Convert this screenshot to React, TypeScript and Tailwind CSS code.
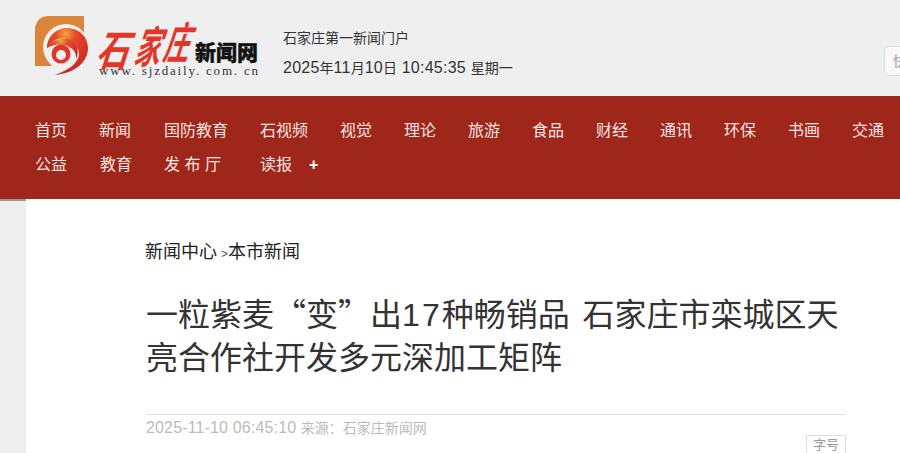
const FONT = { fontFamily: '"Liberation Sans", "Noto Sans CJK SC", sans-serif' };

const navRows = [
  [
    { label: '首页', w: 'w-[64px]' },
    { label: '新闻', w: 'w-[65px]' },
    { label: '国防教育', w: 'w-[96px]' },
    { label: '石视频', w: 'w-[80px]' },
    { label: '视觉', w: 'w-[64px]' },
    { label: '理论', w: 'w-[64px]' },
    { label: '旅游', w: 'w-[64px]' },
    { label: '食品', w: 'w-[64px]' },
    { label: '财经', w: 'w-[64px]' },
    { label: '通讯', w: 'w-[64px]' },
    { label: '环保', w: 'w-[64px]' },
    { label: '书画', w: 'w-[64px]' },
    { label: '交通', w: 'w-[64px]' },
  ],
  [
    { label: '公益', w: 'w-[65px]' },
    { label: '教育', w: 'w-[64px]' },
    { label: '发 布 厅', w: 'w-[96px]' },
    { label: '读报', w: 'w-[49px]' },
  ],
];

function Logo() {
  const cjk = '"Noto Sans CJK SC", sans-serif';
  return (
    <svg width="230" height="62" viewBox="0 0 230 62" className="shrink-0">
      <defs>
        <radialGradient id="swirl" cx="0.45" cy="0.12" r="0.9">
          <stop offset="0" stopColor="#f0a53a" />
          <stop offset="0.28" stopColor="#e5482b" />
          <stop offset="1" stopColor="#c8211f" />
        </radialGradient>
      </defs>
      <path d="M49 0H14C5 0 0 6 0 14V50H30L49 30Z" fill="#d9853a" />
      <circle cx="31" cy="31" r="23" fill="#efefef" />
      <path d="M12 32C12 20 22 12 32 12C44 12 53 21 53 32C53 46 40 57 20 59C34 54 44 46 44 38C44 26 26 22 12 32Z" fill="url(#swirl)" />
      <circle cx="27" cy="38" r="15.5" fill="#efefef" />
      <path d="M12 32C17 22 33 19 40 28C44 33 43 39 41 43C43 30 24 24 12 32Z" fill="url(#swirl)" />
      <circle cx="26" cy="38" r="9.5" fill="#e1352a" />
      <circle cx="26" cy="39" r="5" fill="#efefef" />
      <g fill="#e2362b" fontFamily={cjk} fontWeight="700" fontSize="38">
        <text transform="translate(60 50) skewX(-18) scale(0.85 1.12)">石</text>
        <text transform="translate(98 47) skewX(-18) scale(0.68 1.15)">家</text>
        <text transform="translate(127 43) skewX(-18) scale(0.68 1.15)">庄</text>
      </g>
      <text x="160" y="44" fontFamily={cjk} fontWeight="900" fontSize="21" fill="#111" stroke="#111" strokeWidth="0.4" textLength="63">新闻网</text>
      <text x="64" y="59" fontFamily='"Liberation Serif", serif' fontSize="13" fill="#333" textLength="159">www. sjzdaily. com. cn</text>
    </svg>
  );
}

export default function App() {
  return (
    <div className="w-[900px] h-[453px] overflow-hidden bg-[#efefef]" style={FONT}>
      <header className="h-[96px] flex pl-[35px] relative">
        <div className="pt-[16px]">
          <Logo />
        </div>
        <div className="ml-[18px] pt-[26px] text-[14px] leading-[24px] text-[#333] whitespace-nowrap">
          <p className="h-[30px]">石家庄第一新闻门户</p>
          <p>
            <span className="text-[16px] tracking-[0.25px]">2025</span>年<span className="text-[16px] tracking-[0.25px]">11</span>月<span className="text-[16px] tracking-[0.25px]">10</span>日
            <span className="text-[16px] tracking-[0.25px]"> 10:45:35 </span>星期一
          </p>
        </div>
        <div className="absolute left-[884px] top-[46px] w-[80px] h-[30px] bg-[#f9f9f9] border border-[#dcdcdc] rounded-[5px] pl-[8px] text-[14px] leading-[28px] text-[#999]">
          快速搜索
        </div>
      </header>
      <nav className="h-[103px] bg-[#9f261a] pl-[35px] pt-[18px] text-[16px] leading-[34px] text-[#f5e4e0] whitespace-nowrap">
        {navRows.map((row, i) => (
          <div key={i} className="flex items-center h-[34px]">
            {row.map((item) => (
              <a key={item.label} className={`${item.w} shrink-0`}>
                {item.label}
              </a>
            ))}
            {i === 1 && <span className="text-white font-bold text-[16px]">+</span>}
          </div>
        ))}
      </nav>
      <div className="ml-[26px] h-[254px] bg-white pl-[120px] pr-[54px] relative">
        <div className="absolute -left-[26px] top-0 w-[26px] h-[2px] bg-[#999]" />
        <div className="pt-[41px] text-[18px] leading-[24px] text-[#222] flex items-baseline -ml-[1px]">
          <span>新闻中心</span>
          <span className="text-[12px] text-[#555] ml-[4px]">&gt;</span>
          <span>本市新闻</span>
        </div>
        <h1 className="mt-[25px] w-[700px] text-[32px] leading-[43px] text-[#333] font-normal">
          一粒紫麦<span className="font-['Noto_Sans_CJK_SC']">“</span>变<span className="font-['Noto_Sans_CJK_SC']">”</span>出<span className="tracking-[2px]">17</span>种畅销品<span className="tracking-[4px]"> </span>石家庄市栾城区天亮合作社开发多元深加工矩阵
        </h1>
        <div className="mt-[34px] w-[700px] border-t border-[#dcdcdc] pt-[2px] text-[14px] leading-[22px] text-[#bbb] whitespace-nowrap">
          <span className="text-[16px] tracking-[0.15px]">2025-11-10 06:45:10 </span>来源：石家庄新闻网
        </div>
        <div className="w-[700px] flex justify-end -mt-[4px]">
          <div className="w-[40px] h-[24px] border border-[#ddd] text-center text-[13px] leading-[17px] text-[#999]">字号</div>
        </div>
      </div>
    </div>
  );
}
